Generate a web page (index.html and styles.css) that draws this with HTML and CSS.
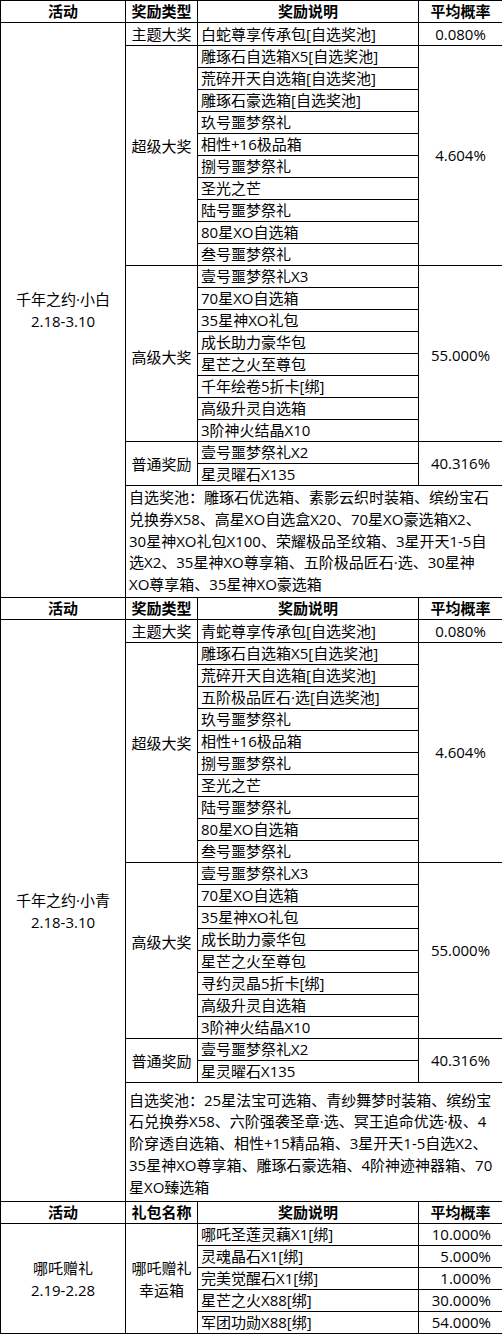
FILE: index.html
```html
<!DOCTYPE html>
<html lang="zh-CN">
<head>
<meta charset="utf-8">
<title>奖励概率</title>
<link rel="stylesheet" href="styles.css">
</head>
<body>
<table class="prob">
  <colgroup>
    <col class="c1"><col class="c2"><col class="c3"><col class="c4">
  </colgroup>
  <tbody>
    <tr class="head"><th>活动</th><th>奖励类型</th><th>奖励说明</th><th>平均概率</th></tr>
    <tr><td class="act" rowspan="22">千年之约·小白<br>2.18-3.10</td><td class="type">主题大奖</td><td class="item">白蛇尊享传承包[自选奖池]</td><td class="rate">0.080%</td></tr>
    <tr><td class="type up10" rowspan="10">超级大奖</td><td class="item">雕琢石自选箱X5[自选奖池]</td><td class="rate" rowspan="10">4.604%</td></tr>
    <tr><td class="item">荒碎开天自选箱[自选奖池]</td></tr>
    <tr><td class="item">雕琢石豪选箱[自选奖池]</td></tr>
    <tr><td class="item">玖号噩梦祭礼</td></tr>
    <tr><td class="item">相性+16极品箱</td></tr>
    <tr><td class="item">捌号噩梦祭礼</td></tr>
    <tr><td class="item">圣光之芒</td></tr>
    <tr><td class="item">陆号噩梦祭礼</td></tr>
    <tr><td class="item">80星XO自选箱</td></tr>
    <tr><td class="item">叁号噩梦祭礼</td></tr>
    <tr><td class="type down3" rowspan="8">高级大奖</td><td class="item">壹号噩梦祭礼X3</td><td class="rate down2" rowspan="8">55.000%</td></tr>
    <tr><td class="item">70星XO自选箱</td></tr>
    <tr><td class="item">35星神XO礼包</td></tr>
    <tr><td class="item">成长助力豪华包</td></tr>
    <tr><td class="item">星芒之火至尊包</td></tr>
    <tr><td class="item">千年绘卷5折卡[绑]</td></tr>
    <tr><td class="item">高级升灵自选箱</td></tr>
    <tr><td class="item">3阶神火结晶X10</td></tr>
    <tr><td class="type" rowspan="2">普通奖励</td><td class="item">壹号噩梦祭礼X2</td><td class="rate" rowspan="2">40.316%</td></tr>
    <tr><td class="item">星灵曜石X135</td></tr>
    <tr><td class="pool pool-a" colspan="3">自选奖池：雕琢石优选箱、素影云织时装箱、缤纷宝石<br>兑换券X58、高星XO自选盒X20、70星XO豪选箱X2、<br>30星神XO礼包X100、荣耀极品圣纹箱、3星开天1-5自<br>选X2、35星神XO尊享箱、五阶极品匠石·选、30星神<br>XO尊享箱、35星神XO豪选箱</td></tr>

    <tr class="head"><th>活动</th><th>奖励类型</th><th>奖励说明</th><th>平均概率</th></tr>
    <tr><td class="act" rowspan="22">千年之约·小青<br>2.18-3.10</td><td class="type">主题大奖</td><td class="item">青蛇尊享传承包[自选奖池]</td><td class="rate">0.080%</td></tr>
    <tr><td class="type up10" rowspan="10">超级大奖</td><td class="item">雕琢石自选箱X5[自选奖池]</td><td class="rate" rowspan="10">4.604%</td></tr>
    <tr><td class="item">荒碎开天自选箱[自选奖池]</td></tr>
    <tr><td class="item">五阶极品匠石·选[自选奖池]</td></tr>
    <tr><td class="item">玖号噩梦祭礼</td></tr>
    <tr><td class="item">相性+16极品箱</td></tr>
    <tr><td class="item">捌号噩梦祭礼</td></tr>
    <tr><td class="item">圣光之芒</td></tr>
    <tr><td class="item">陆号噩梦祭礼</td></tr>
    <tr><td class="item">80星XO自选箱</td></tr>
    <tr><td class="item">叁号噩梦祭礼</td></tr>
    <tr><td class="type up9" rowspan="8">高级大奖</td><td class="item">壹号噩梦祭礼X3</td><td class="rate" rowspan="8">55.000%</td></tr>
    <tr><td class="item">70星XO自选箱</td></tr>
    <tr><td class="item">35星神XO礼包</td></tr>
    <tr><td class="item">成长助力豪华包</td></tr>
    <tr><td class="item">星芒之火至尊包</td></tr>
    <tr><td class="item">寻约灵晶5折卡[绑]</td></tr>
    <tr><td class="item">高级升灵自选箱</td></tr>
    <tr><td class="item">3阶神火结晶X10</td></tr>
    <tr><td class="type" rowspan="2">普通奖励</td><td class="item">壹号噩梦祭礼X2</td><td class="rate" rowspan="2">40.316%</td></tr>
    <tr><td class="item">星灵曜石X135</td></tr>
    <tr><td class="pool pool-b" colspan="3">自选奖池：25星法宝可选箱、青纱舞梦时装箱、缤纷宝<br>石兑换券X58、六阶强袭圣章·选、冥王追命优选·极、4<br>阶穿透自选箱、相性+15精品箱、3星开天1-5自选X2、<br>35星神XO尊享箱、雕琢石豪选箱、4阶神迹神器箱、70<br>星XO臻选箱</td></tr>

    <tr class="head"><th>活动</th><th>礼包名称</th><th>奖励说明</th><th>平均概率</th></tr>
    <tr><td class="act" rowspan="5">哪吒赠礼<br>2.19-2.28</td><td class="type" rowspan="5">哪吒赠礼<br>幸运箱</td><td class="item">哪吒圣莲灵藕X1[绑]</td><td class="rate rate-r">10.000%</td></tr>
    <tr><td class="item">灵魂晶石X1[绑]</td><td class="rate rate-r">5.000%</td></tr>
    <tr><td class="item">完美觉醒石X1[绑]</td><td class="rate rate-r">1.000%</td></tr>
    <tr><td class="item">星芒之火X88[绑]</td><td class="rate rate-r">30.000%</td></tr>
    <tr><td class="item">军团功勋X88[绑]</td><td class="rate rate-r">54.000%</td></tr>
  </tbody>
</table>
</body>
</html>
```

FILE: styles.css
```css
html, body {
  margin: 0;
  padding: 0;
  background: #ffffff;
}

.prob {
  border-collapse: collapse;
  table-layout: fixed;
  width: 502px;
  font-family: "Open Sans", "Noto Sans CJK SC", sans-serif;
  font-size: 15px;
  color: #000000;
}

.c1 { width: 125px; }
.c2 { width: 72px; }
.c3 { width: 221px; }
.c4 { width: 84px; }

.prob th,
.prob td {
  border: 1px solid #000000;
  padding: 0 3px;
  height: 21px;
  line-height: 21px;
  white-space: nowrap;
  overflow: hidden;
  vertical-align: middle;
}

.prob th {
  font-weight: bold;
  text-align: center;
}

.act,
.type {
  text-align: center;
}

.prob td.act,
.prob td.type {
  line-height: 22px;
}

.item {
  text-align: left;
}

.rate {
  text-align: center;
}

.prob td.rate-r {
  text-align: right;
  padding-right: 11px;
}

.prob td.pool {
  text-align: left;
  line-height: 21.7px;
  white-space: nowrap;
}

.prob td.pool-a {
  height: 111px;
}

.prob td.pool-b {
  height: 114px;
  padding-top: 4px;
}

.prob td.up10 { padding-bottom: 20px; }
.prob td.up9 { padding-bottom: 18px; }
.prob td.down3 { padding-top: 6px; }
.prob td.down2 { padding-top: 4px; }
```
